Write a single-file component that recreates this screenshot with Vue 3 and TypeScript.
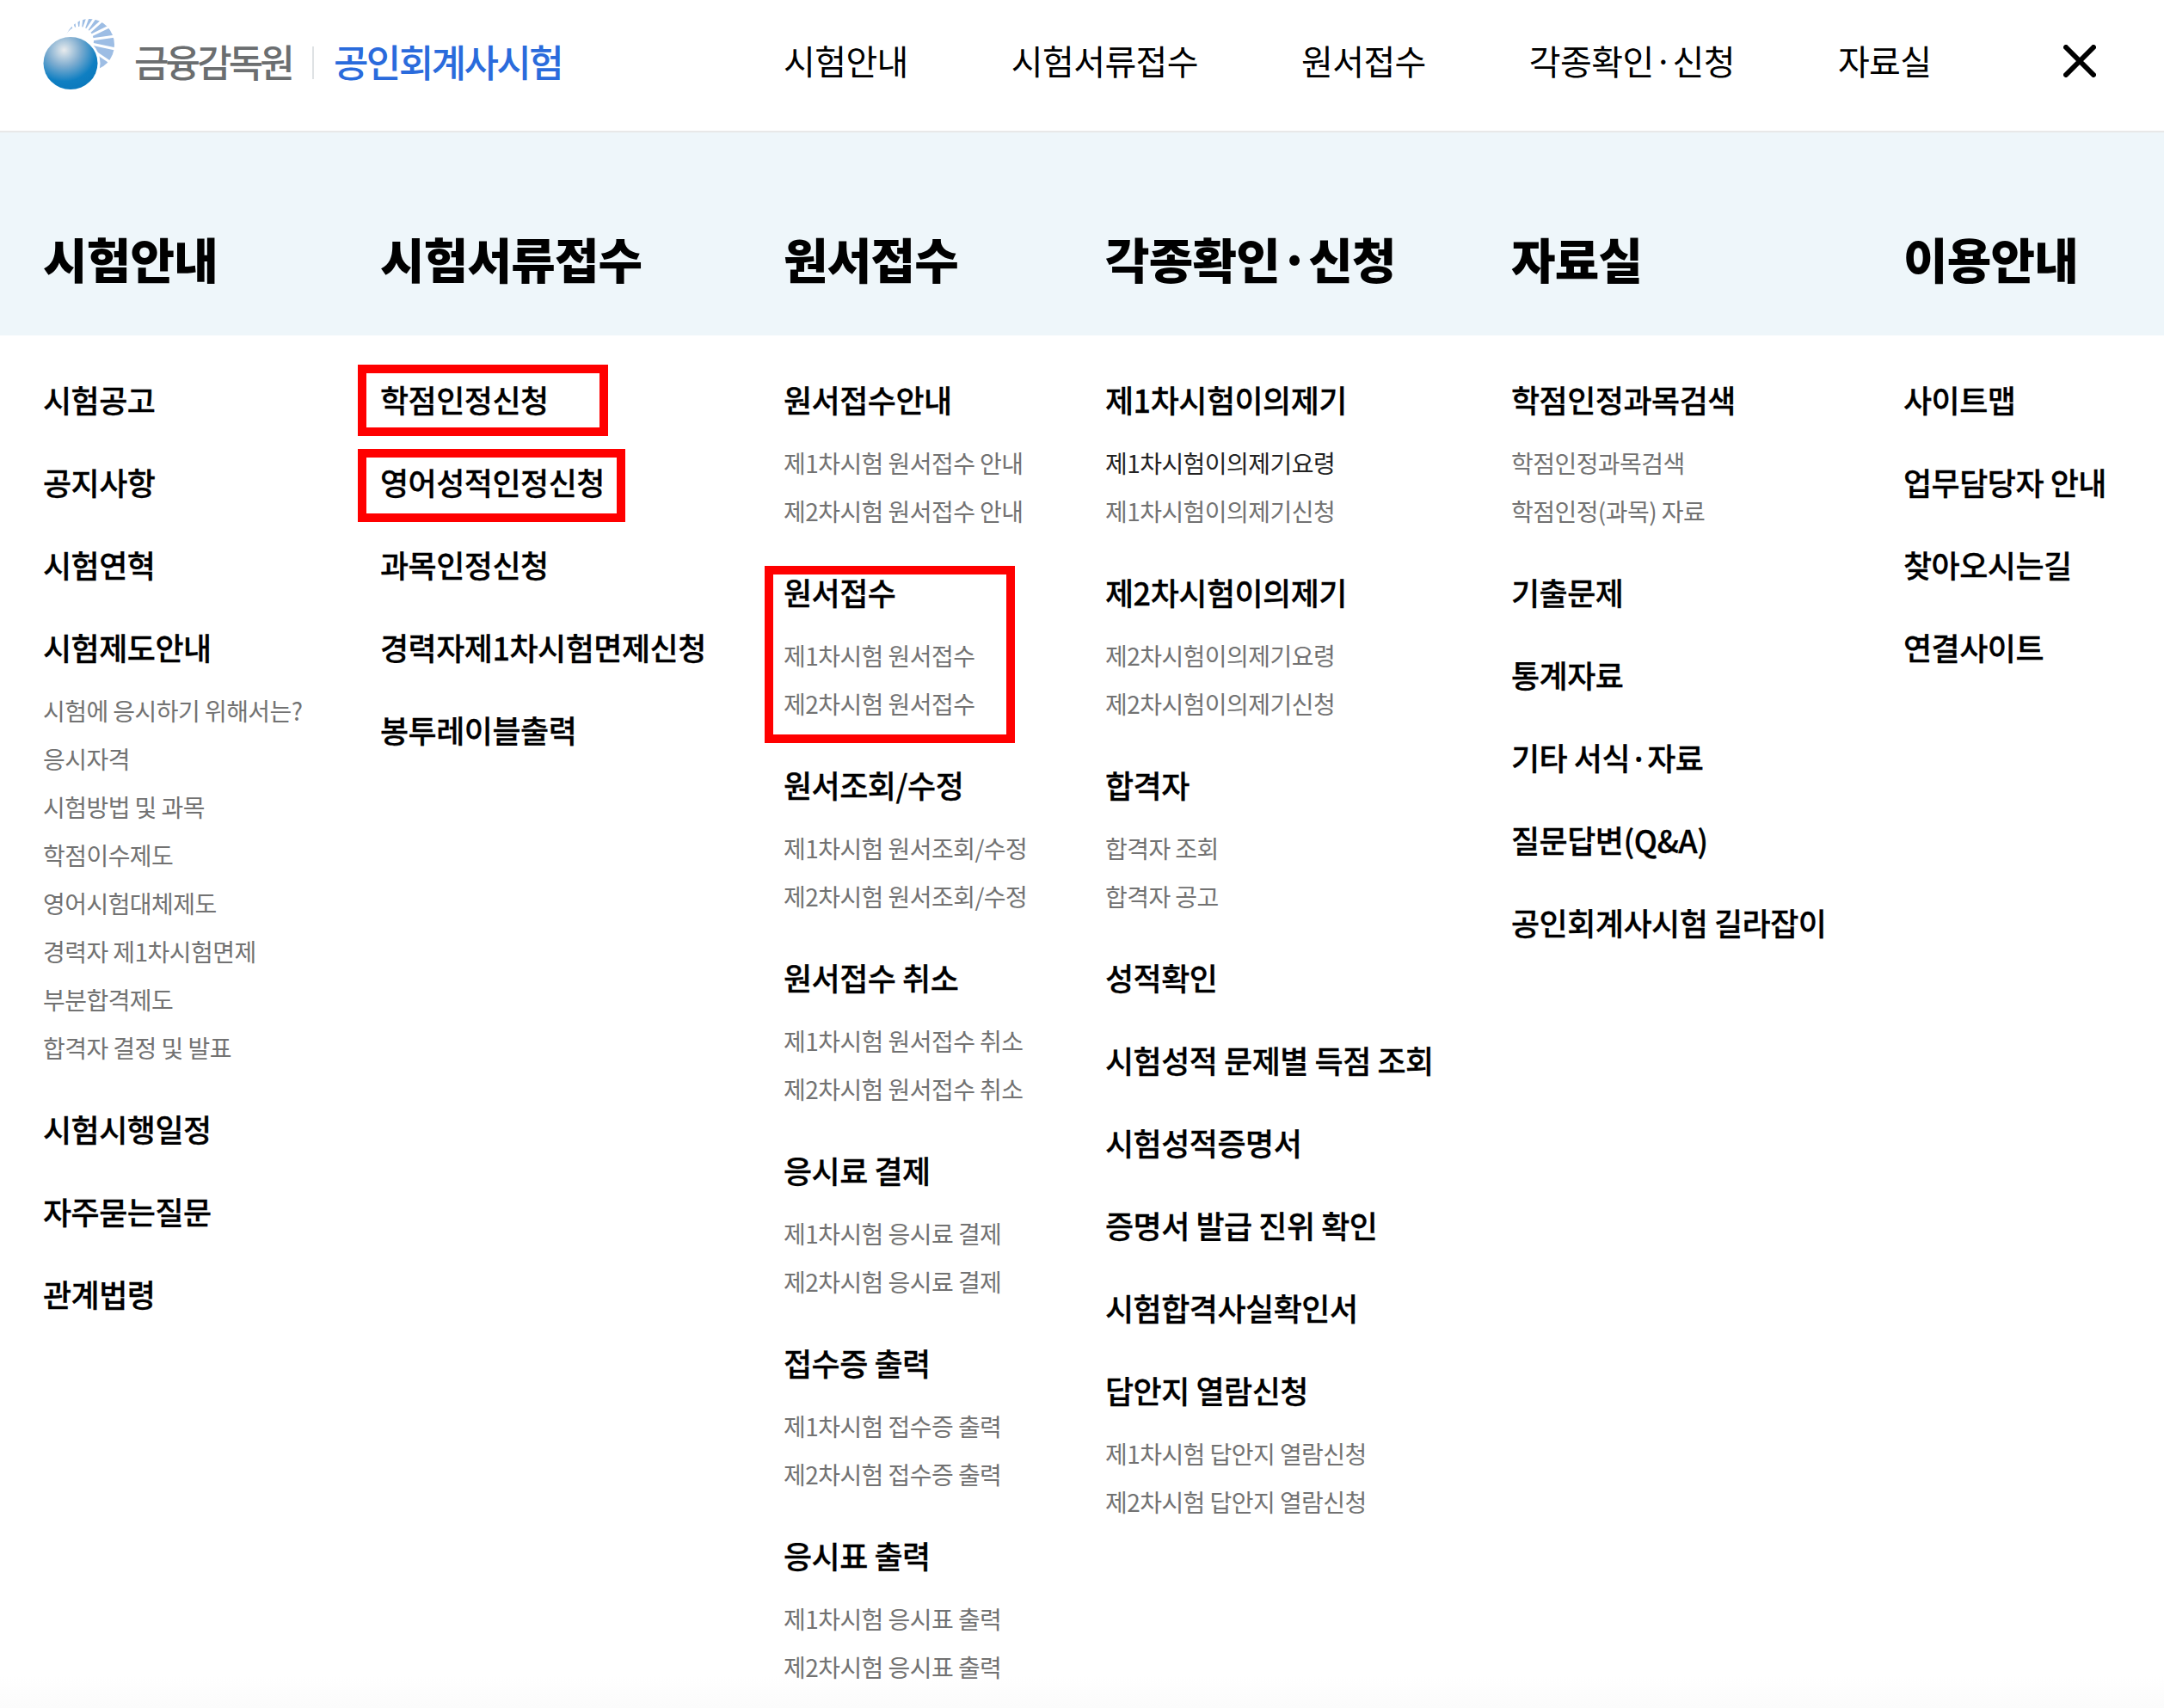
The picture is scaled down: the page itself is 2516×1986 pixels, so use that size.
<script setup lang="ts">
interface MenuItem {
  label: string
  boxed?: 'credit' | 'english' | 'apply'
  subs?: { label: string; dark?: boolean }[]
}
interface MenuColumn {
  title: string
  items: MenuItem[]
}

const subs = (...labels: string[]) => labels.map((label) => ({ label }))

const topNav = ['시험안내', '시험서류접수', '원서접수', '각종확인·신청', '자료실']

const columns: MenuColumn[] = [
  {
    title: '시험안내',
    items: [
      { label: '시험공고' },
      { label: '공지사항' },
      { label: '시험연혁' },
      {
        label: '시험제도안내',
        subs: subs(
          '시험에 응시하기 위해서는?',
          '응시자격',
          '시험방법 및 과목',
          '학점이수제도',
          '영어시험대체제도',
          '경력자 제1차시험면제',
          '부분합격제도',
          '합격자 결정 및 발표',
        ),
      },
      { label: '시험시행일정' },
      { label: '자주묻는질문' },
      { label: '관계법령' },
    ],
  },
  {
    title: '시험서류접수',
    items: [
      { label: '학점인정신청', boxed: 'credit' },
      { label: '영어성적인정신청', boxed: 'english' },
      { label: '과목인정신청' },
      { label: '경력자제1차시험면제신청' },
      { label: '봉투레이블출력' },
    ],
  },
  {
    title: '원서접수',
    items: [
      { label: '원서접수안내', subs: subs('제1차시험 원서접수 안내', '제2차시험 원서접수 안내') },
      { label: '원서접수', boxed: 'apply', subs: subs('제1차시험 원서접수', '제2차시험 원서접수') },
      { label: '원서조회/수정', subs: subs('제1차시험 원서조회/수정', '제2차시험 원서조회/수정') },
      { label: '원서접수 취소', subs: subs('제1차시험 원서접수 취소', '제2차시험 원서접수 취소') },
      { label: '응시료 결제', subs: subs('제1차시험 응시료 결제', '제2차시험 응시료 결제') },
      { label: '접수증 출력', subs: subs('제1차시험 접수증 출력', '제2차시험 접수증 출력') },
      { label: '응시표 출력', subs: subs('제1차시험 응시표 출력', '제2차시험 응시표 출력') },
    ],
  },
  {
    title: '각종확인·신청',
    items: [
      {
        label: '제1차시험이의제기',
        subs: [{ label: '제1차시험이의제기요령', dark: true }, { label: '제1차시험이의제기신청' }],
      },
      { label: '제2차시험이의제기', subs: subs('제2차시험이의제기요령', '제2차시험이의제기신청') },
      { label: '합격자', subs: subs('합격자 조회', '합격자 공고') },
      { label: '성적확인' },
      { label: '시험성적 문제별 득점 조회' },
      { label: '시험성적증명서' },
      { label: '증명서 발급 진위 확인' },
      { label: '시험합격사실확인서' },
      { label: '답안지 열람신청', subs: subs('제1차시험 답안지 열람신청', '제2차시험 답안지 열람신청') },
    ],
  },
  {
    title: '자료실',
    items: [
      { label: '학점인정과목검색', subs: subs('학점인정과목검색', '학점인정(과목) 자료') },
      { label: '기출문제' },
      { label: '통계자료' },
      { label: '기타 서식·자료' },
      { label: '질문답변(Q&A)' },
      { label: '공인회계사시험 길라잡이' },
    ],
  },
  {
    title: '이용안내',
    items: [
      { label: '사이트맵' },
      { label: '업무담당자 안내' },
      { label: '찾아오시는길' },
      { label: '연결사이트' },
    ],
  },
]

// sun rays of the logo, as angles in degrees
const rays = [-112, -98, -84, -70, -56, -42, -26, -8, 12, 34, 56, 78]
</script>

<template>
  <div class="page">
    <header class="topbar">
      <div class="logo">
        <svg class="mark" width="86" height="86" viewBox="0 0 86 86" aria-hidden="true">
          <defs>
            <radialGradient id="ball" cx="0.38" cy="0.25" r="0.8">
              <stop offset="0" stop-color="#e8ebed" />
              <stop offset="0.38" stop-color="#7fadd0" />
              <stop offset="0.75" stop-color="#0f7fc2" />
              <stop offset="1" stop-color="#0a78bc" />
            </radialGradient>
          </defs>
          <ellipse cx="54" cy="32" rx="29" ry="30" fill="#9dbde4" />
          <g stroke="#ffffff" stroke-width="3">
            <line
              v-for="angle in rays"
              :key="angle"
              x1="42"
              y1="28"
              x2="92"
              y2="28"
              :transform="`rotate(${angle} 42 28)`"
            />
          </g>
          <circle cx="42" cy="28" r="17" fill="#ffffff" />
          <ellipse cx="33" cy="53.5" rx="33.5" ry="32" fill="#ffffff" />
          <ellipse cx="32" cy="53.5" rx="31.5" ry="30.5" fill="url(#ball)" />
        </svg>
        <span class="org">금융감독원</span>
        <span class="divider"></span>
        <span class="site">공인회계사시험</span>
      </div>

      <nav class="topnav">
        <a v-for="name in topNav" :key="name" class="topnav-link">{{ name }}</a>
      </nav>

      <svg class="close" width="38" height="38" viewBox="0 0 38 38" aria-label="닫기">
        <path d="M3 3 L35 35 M35 3 L3 35" stroke="#000" stroke-width="6" stroke-linecap="round" />
      </svg>
    </header>

    <div class="band grid">
      <h2 v-for="col in columns" :key="col.title" class="band-title">{{ col.title }}</h2>
    </div>

    <div class="menu grid">
      <ul v-for="col in columns" :key="col.title" class="col">
        <li v-for="item in col.items" :key="item.label" class="item">
          <span v-if="item.boxed" class="mark-box" :class="item.boxed"></span>
          <a class="item-link">{{ item.label }}</a>
          <ul v-if="item.subs" class="subs">
            <li v-for="sub in item.subs" :key="sub.label" class="sub" :class="{ dark: sub.dark }">
              {{ sub.label }}
            </li>
          </ul>
        </li>
      </ul>
    </div>
  </div>
</template>

<style scoped>
.page {
  width: 2516px;
  height: 1986px;
  background: linear-gradient(#fff 1950px, #fbfbfb);
  font-family: "Noto Sans CJK KR", "Noto Sans", sans-serif;
  color: #000;
  overflow: hidden;
}

/* Top bar */
.topbar {
  display: flex;
  align-items: center;
  height: 142px;
  padding: 0 79px 10px 50px;
  border-bottom: 2px solid #e8e8e8;
}

.logo {
  display: flex;
  align-items: center;
  width: 861px;
  flex: none;
}

.mark {
  flex: none;
  margin: 0 20px 16px 0;
}

.org {
  font-size: 44px;
  font-weight: 500;
  letter-spacing: -3.9px;
  color: #6b6e70;
}

.divider {
  width: 2px;
  height: 38px;
  background: #dfe2e4;
  margin: 4px 23px 0 24px;
}

.site {
  font-size: 44px;
  font-weight: 500;
  letter-spacing: -2.6px;
  color: #2a6bdc;
}

.topnav {
  display: flex;
  gap: 120px;
  flex: none;
  margin-top: -3px;
}

.topnav-link {
  font-size: 40px;
  letter-spacing: -0.6px;
  line-height: 60px;
}

.close {
  flex: none;
  margin-left: auto;
}

/* Columns */
.grid {
  display: grid;
  grid-template-columns: 392px 469px 374px 472px 456px 1fr;
  padding-left: 50px;
}

.band {
  align-items: center;
  height: 236px;
  background: #eef6fa;
}

.band-title {
  margin: 0;
  padding-top: 56px;
  font-size: 56px;
  font-weight: 900;
  letter-spacing: -0.8px;
  line-height: 1;
}

.menu {
  padding-top: 26px;
}

.col {
  margin: 0;
  padding: 0;
  list-style: none;
}

.item {
  position: relative;
}

.item-link {
  display: block;
  font-size: 36px;
  font-weight: 500;
  letter-spacing: -0.5px;
  line-height: 96px;
  white-space: nowrap;
  -webkit-text-stroke: 0.3px #000;
}

.subs {
  margin: -2px 0 18px;
  padding: 0;
  list-style: none;
}

.sub {
  font-size: 28px;
  letter-spacing: -0.55px;
  line-height: 56px;
  color: #727272;
  white-space: nowrap;
}

.sub.dark {
  color: #222;
}

/* Red marks drawn over the menu */
.mark-box {
  position: absolute;
  left: -26px;
  border: 10px solid #f00;
  box-sizing: border-box;
  pointer-events: none;
}

.mark-box.credit {
  top: 8px;
  width: 291px;
  height: 83px;
}

.mark-box.english {
  top: 10px;
  width: 311px;
  height: 85px;
}

.mark-box.apply {
  left: -22px;
  top: 18px;
  width: 291px;
  height: 206px;
}
</style>

<style>
html,
body {
  margin: 0;
  background: #fff;
}
</style>
